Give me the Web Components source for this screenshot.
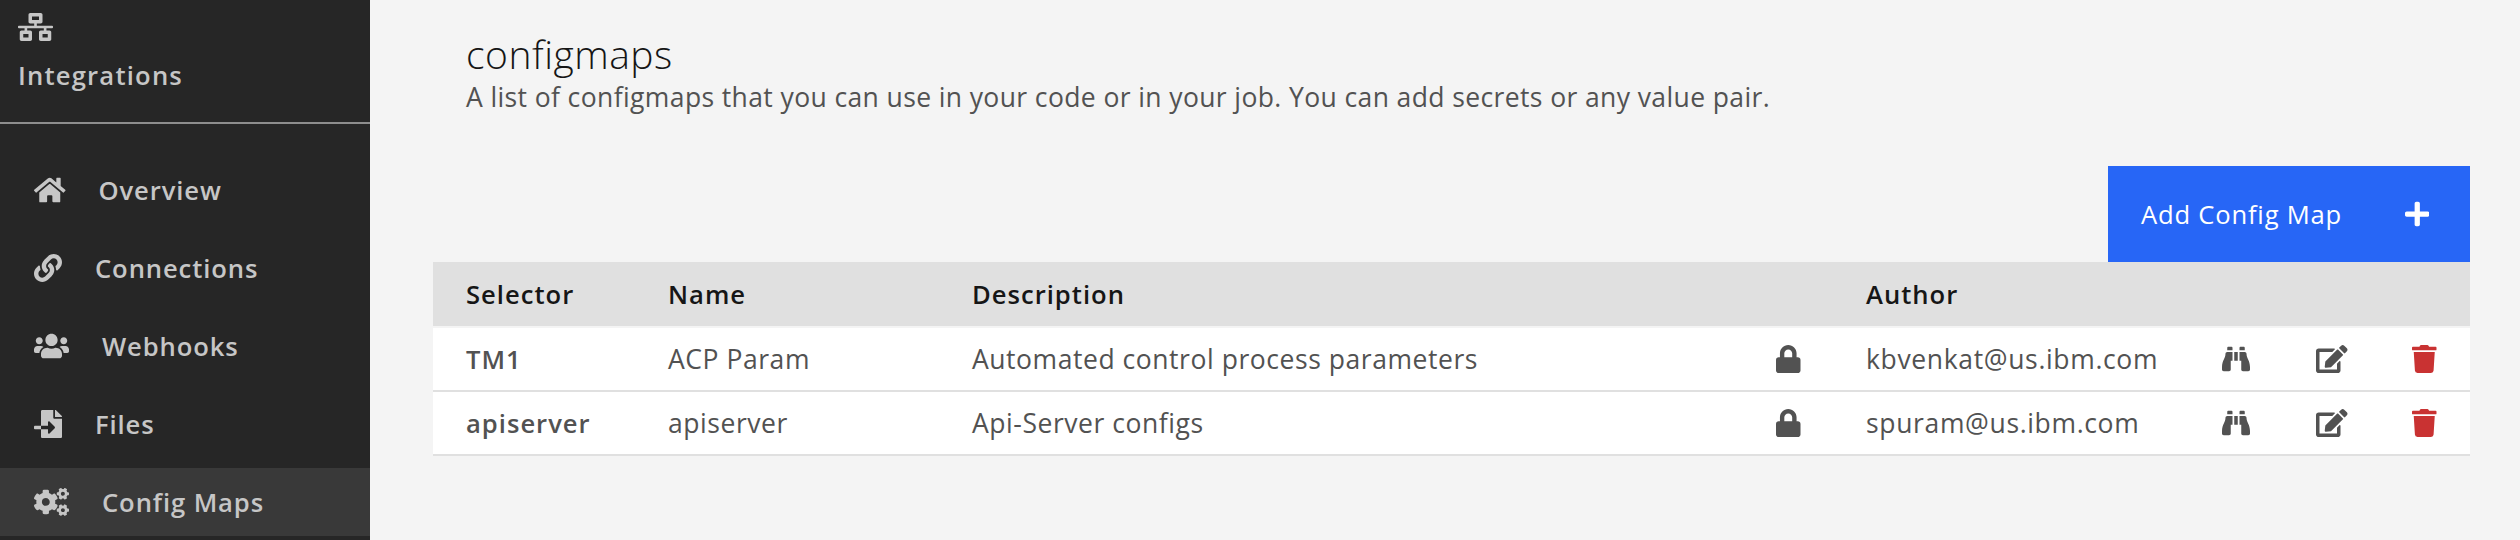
<!DOCTYPE html>
<html>
<head>
<meta charset="utf-8">
<title>Config Maps</title>
<style>
  html, body { margin: 0; height: 540px; overflow: hidden; background: #f4f4f4; }
  body { display: flex; font-family: "Open Sans", "Noto Sans", sans-serif; }
</style>
</head>
<body>
<app-sidebar>
  <nav-item icon="home">Overview</nav-item>
  <nav-item icon="link">Connections</nav-item>
  <nav-item icon="users">Webhooks</nav-item>
  <nav-item icon="file-import">Files</nav-item>
  <nav-item icon="cogs" active>Config Maps</nav-item>
</app-sidebar>
<config-page heading="configmaps" description="A list of configmaps that you can use in your code or in your job. You can add secrets or any value pair.">
  <add-button slot="action">Add Config Map</add-button>
  <config-row header>
    <span>Selector</span><span>Name</span><span>Description</span><span></span><span>Author</span>
  </config-row>
  <config-row selector="TM1" name="ACP Param" description="Automated control process parameters" author="kbvenkat@us.ibm.com"></config-row>
  <config-row selector="apiserver" name="apiserver" description="Api-Server configs" author="spuram@us.ibm.com"></config-row>
</config-page>

<script>
const ICONS = {
  'network-wired': [640, 'M640 264v-16c0-8.84-7.16-16-16-16H344v-40h72c17.67 0 32-14.33 32-32V32c0-17.67-14.33-32-32-32H224c-17.67 0-32 14.33-32 32v128c0 17.67 14.33 32 32 32h72v40H16c-8.84 0-16 7.16-16 16v16c0 8.84 7.16 16 16 16h104v40H64c-17.67 0-32 14.33-32 32v128c0 17.67 14.33 32 32 32h160c17.67 0 32-14.33 32-32V352c0-17.67-14.33-32-32-32h-56v-40h304v40h-56c-17.67 0-32 14.33-32 32v128c0 17.67 14.33 32 32 32h160c17.67 0 32-14.33 32-32V352c0-17.67-14.33-32-32-32h-56v-40h104c8.84 0 16-7.16 16-16zM256 128V64h128v64H256zm-64 320H96v-64h96v64zm352 0h-96v-64h96v64z'],
  home: [576, 'M280.37 148.26L96 300.11V464a16 16 0 0 0 16 16l112.06-.29a16 16 0 0 0 15.92-16V368a16 16 0 0 1 16-16h64a16 16 0 0 1 16 16v95.64a16 16 0 0 0 16 16.05L464 480a16 16 0 0 0 16-16V300L295.67 148.26a12.19 12.19 0 0 0-15.3 0zM571.6 251.47L488 182.56V44.05a12 12 0 0 0-12-12h-56a12 12 0 0 0-12 12v72.61L318.47 43a48 48 0 0 0-61 0L4.34 251.47a12 12 0 0 0-1.6 16.9l25.5 31A12 12 0 0 0 45.15 301l235.22-193.74a12.19 12.19 0 0 1 15.3 0L530.9 301a12 12 0 0 0 16.9-1.6l25.5-31a12 12 0 0 0-1.7-16.93z'],
  link: [512, 'M326.612 185.391c59.747 59.809 58.927 155.698.36 214.59-.11.12-.24.25-.36.37l-67.2 67.2c-59.27 59.27-155.699 59.262-214.96 0-59.27-59.26-59.27-155.7 0-214.96l37.106-37.106c9.84-9.84 26.786-3.3 27.294 10.606.648 17.722 3.826 35.527 9.69 52.721 1.986 5.822.567 12.262-3.783 16.612l-13.087 13.087c-28.026 28.026-28.905 73.66-1.155 101.96 28.024 28.579 74.086 28.749 102.325.51l67.2-67.19c28.191-28.191 28.073-73.757 0-101.83-3.701-3.694-7.429-6.564-10.341-8.569a16.037 16.037 0 0 1-6.947-12.606c-.396-10.567 3.348-21.456 11.698-29.806l21.054-21.055c5.521-5.521 14.182-6.199 20.584-1.731a152.482 152.482 0 0 1 20.522 17.197zM467.547 44.449c-59.261-59.262-155.69-59.27-214.96 0l-67.2 67.2c-.12.12-.25.25-.36.37-58.566 58.892-59.387 154.781.36 214.59a152.454 152.454 0 0 0 20.521 17.196c6.402 4.468 15.064 3.789 20.584-1.731l21.054-21.055c8.35-8.35 12.094-19.239 11.698-29.806a16.037 16.037 0 0 0-6.947-12.606c-2.912-2.005-6.64-4.875-10.341-8.569-28.073-28.073-28.191-73.639 0-101.83l67.2-67.19c28.239-28.239 74.3-28.069 102.325.51 27.75 28.3 26.872 73.934-1.155 101.96l-13.087 13.087c-4.35 4.35-5.769 10.79-3.783 16.612 5.864 17.194 9.042 34.999 9.69 52.721.509 13.906 17.454 20.446 27.294 10.606l37.106-37.106c59.271-59.259 59.271-155.699.001-214.959z'],
  users: [640, 'M96 224c35.3 0 64-28.7 64-64s-28.7-64-64-64-64 28.7-64 64 28.7 64 64 64zm448 0c35.3 0 64-28.7 64-64s-28.7-64-64-64-64 28.7-64 64 28.7 64 64 64zm32 32h-64c-17.6 0-33.5 7.1-45.1 18.6 40.3 22.1 68.9 62 75.1 109.4h66c17.7 0 32-14.3 32-32v-32c0-35.3-28.7-64-64-64zm-256 0c61.9 0 112-50.1 112-112S381.9 32 320 32 208 82.1 208 144s50.1 112 112 112zm76.8 32h-8.3c-20.8 10-43.9 16-68.5 16s-47.6-6-68.5-16h-8.3C179.6 288 128 339.6 128 403.2V432c0 26.5 21.5 48 48 48h288c26.5 0 48-21.5 48-48v-28.8c0-63.6-51.6-115.2-115.2-115.2zm-223.7-13.4C161.5 263.1 145.6 256 128 256H64c-35.3 0-64 28.7-64 64v32c0 17.7 14.3 32 32 32h65.9c6.3-47.4 34.9-87.3 75.2-109.4z'],
  'file-import': [512, 'M16 288c-8.8 0-16 7.2-16 16v32c0 8.8 7.2 16 16 16h112v-64zm489-183L407.1 7c-4.5-4.5-10.6-7-17-7H384v128h128v-6.1c0-6.3-2.5-12.4-7-16.9zm-153 31V0H152c-13.3 0-24 10.7-24 24v264h128v-65.2c0-14.3 17.3-21.4 27.4-11.3L379 308c6.6 6.7 6.6 17.4 0 24l-95.7 96.4c-10.1 10.1-27.4 3-27.4-11.3V352H128v136c0 13.3 10.7 24 24 24h336c13.3 0 24-10.7 24-24V160H376c-13.2 0-24-10.8-24-24z'],
  cogs: [640, 'M512.1 191l-8.2 14.3c-3 5.3-9.4 7.5-15.1 5.4-11.8-4.4-22.6-10.7-32.1-18.6-4.6-3.8-5.8-10.5-2.8-15.7l8.2-14.3c-6.9-8-12.3-17.3-15.9-27.4h-16.5c-6 0-11.2-4.3-12.2-10.3-2-12-2.1-24.6 0-37.1 1-6 6.2-10.4 12.2-10.4h16.5c3.6-10.1 9-19.4 15.9-27.4l-8.2-14.3c-3-5.2-1.9-11.9 2.8-15.7 9.5-7.9 20.4-14.2 32.1-18.6 5.7-2.1 12.1.1 15.1 5.4l8.2 14.3c10.5-1.9 21.2-1.9 31.7 0L552 6.3c3-5.3 9.4-7.5 15.1-5.4 11.8 4.4 22.6 10.7 32.1 18.6 4.6 3.8 5.8 10.5 2.8 15.7l-8.2 14.3c6.9 8 12.3 17.3 15.9 27.4h16.5c6 0 11.2 4.3 12.2 10.3 2 12 2.1 24.6 0 37.1-1 6-6.2 10.4-12.2 10.4h-16.5c-3.6 10.1-9 19.4-15.9 27.4l8.2 14.3c3 5.2 1.9 11.9-2.8 15.7-9.5 7.9-20.4 14.2-32.1 18.6-5.7 2.1-12.1-.1-15.1-5.4l-8.2-14.3c-10.4 1.9-21.2 1.9-31.7 0zm-10.5-58.8c38.5 29.6 82.4-14.3 52.8-52.8-38.5-29.7-82.4 14.3-52.8 52.8zM386.3 286.1l33.7 16.8c10.1 5.8 14.5 18.1 10.5 29.1-8.9 24.2-26.4 46.4-42.6 65.8-7.4 8.9-20.2 11.1-30.3 5.3l-29.1-16.8c-16 13.7-34.6 24.6-54.9 31.7v33.6c0 11.6-8.3 21.6-19.7 23.6-24.6 4.2-50.4 4.4-75.9 0-11.5-2-20-11.9-20-23.6V418c-20.3-7.2-38.9-18-54.9-31.7L74 403c-10 5.8-22.9 3.6-30.3-5.3-16.2-19.4-33.3-41.6-42.2-65.7-4-10.9.4-23.2 10.5-29.1l33.3-16.8c-3.9-20.9-3.9-42.4 0-63.4L12 205.8c-10.1-5.8-14.6-18.1-10.5-29 8.9-24.2 26-46.4 42.2-65.8 7.4-8.9 20.2-11.1 30.3-5.3l29.1 16.8c16-13.7 34.6-24.6 54.9-31.7V57.1c0-11.5 8.2-21.5 19.6-23.5 24.6-4.2 50.5-4.4 76-.1 11.5 2 20 11.9 20 23.6v33.6c20.3 7.2 38.9 18 54.9 31.7l29.1-16.8c10-5.8 22.9-3.6 30.3 5.3 16.2 19.4 33.2 41.6 42.1 65.8 4 10.9.1 23.2-10 29.1l-33.7 16.8c3.9 21 3.9 42.5 0 63.5zm-117.6 21.1c59.2-77-28.7-164.9-105.7-105.7-59.2 77 28.7 164.9 105.7 105.7zm243.4 182.7l-8.2 14.3c-3 5.3-9.4 7.5-15.1 5.4-11.8-4.4-22.6-10.7-32.1-18.6-4.6-3.8-5.8-10.5-2.8-15.7l8.2-14.3c-6.9-8-12.3-17.3-15.9-27.4h-16.5c-6 0-11.2-4.3-12.2-10.3-2-12-2.1-24.6 0-37.1 1-6 6.2-10.4 12.2-10.4h16.5c3.6-10.1 9-19.4 15.9-27.4l-8.2-14.3c-3-5.2-1.9-11.9 2.8-15.7 9.5-7.9 20.4-14.2 32.1-18.6 5.7-2.1 12.1.1 15.1 5.4l8.2 14.3c10.5-1.9 21.2-1.9 31.7 0l8.2-14.3c3-5.3 9.4-7.5 15.1-5.4 11.8 4.4 22.6 10.7 32.1 18.6 4.6 3.8 5.8 10.5 2.8 15.7l-8.2 14.3c6.9 8 12.3 17.3 15.9 27.4h16.5c6 0 11.2 4.3 12.2 10.3 2 12 2.1 24.6 0 37.1-1 6-6.2 10.4-12.2 10.4h-16.5c-3.6 10.1-9 19.4-15.9 27.4l8.2 14.3c3 5.2 1.9 11.9-2.8 15.7-9.5 7.9-20.4 14.2-32.1 18.6-5.7 2.1-12.1-.1-15.1-5.4l-8.2-14.3c-10.4 1.9-21.2 1.9-31.7 0zM501.6 431c38.5 29.6 82.4-14.3 52.8-52.8-38.5-29.6-82.4 14.3-52.8 52.8z'],
  lock: [448, 'M400 224h-24v-72C376 68.2 307.8 0 224 0S72 68.2 72 152v72H48c-26.5 0-48 21.5-48 48v192c0 26.5 21.5 48 48 48h352c26.5 0 48-21.5 48-48V272c0-26.5-21.5-48-48-48zm-104 0H152v-72c0-39.7 32.3-72 72-72s72 32.3 72 72v72z'],
  binoculars: [512, 'M416 48c0-8.84-7.16-16-16-16h-64c-8.84 0-16 7.16-16 16v48h96V48zM63.91 159.99C61.4 253.84 3.46 274.22 0 404v44c0 17.67 14.33 32 32 32h96c17.67 0 32-14.33 32-32V288h32V128H95.84c-17.63 0-31.45 14.37-31.93 31.99zm384.18 0c-.48-17.62-14.3-31.99-31.93-31.99H320v160h32v160c0 17.67 14.33 32 32 32h96c17.67 0 32-14.33 32-32v-44c-3.46-129.78-61.4-150.16-63.91-244.01zM176 32h-64c-8.84 0-16 7.16-16 16v48h96V48c0-8.84-7.16-16-16-16zm48 256h64V128h-64v160z'],
  edit: [576, 'M402.6 83.2l90.2 90.2c3.8 3.8 3.8 10 0 13.8L274.4 405.6l-92.8 10.3c-12.4 1.4-22.9-9.1-21.5-21.5l10.3-92.8L388.8 83.2c3.8-3.8 10-3.8 13.8 0zm162-22.9l-48.8-48.8c-15.2-15.2-39.9-15.2-55.2 0l-35.4 35.4c-3.8 3.8-3.8 10 0 13.8l90.2 90.2c3.8 3.8 10 3.8 13.8 0l35.4-35.4c15.2-15.3 15.2-40 0-55.2zM384 346.2V448H64V128h229.8c3.2 0 6.2-1.3 8.5-3.5l40-40c7.6-7.6 2.2-20.5-8.5-20.5H48C21.5 64 0 85.5 0 112v352c0 26.5 21.5 48 48 48h352c26.5 0 48-21.5 48-48V306.2c0-10.7-12.9-16-20.5-8.5l-40 40c-2.2 2.3-3.5 5.3-3.5 8.5z'],
  trash: [448, 'M432 32H312l-9.4-18.7A24 24 0 0 0 281.1 0H166.8a23.72 23.72 0 0 0-21.4 13.3L136 32H16A16 16 0 0 0 0 48v32a16 16 0 0 0 16 16h416a16 16 0 0 0 16-16V48a16 16 0 0 0-16-16zM53.2 467a48 48 0 0 0 47.9 45h245.8a48 48 0 0 0 47.9-45L416 128H32z'],
  plus: [448, 'M416 208H272V64c0-17.67-14.33-32-32-32h-32c-17.67 0-32 14.33-32 32v144H32c-17.67 0-32 14.33-32 32v32c0 17.67 14.33 32 32 32h144v144c0 17.67 14.33 32 32 32h32c17.67 0 32-14.33 32-32V304h144c17.67 0 32-14.33 32-32v-32c0-17.67-14.33-32-32-32z']
};

/** Font Awesome style glyph, 28px tall, width follows the viewBox. */
class FaIcon extends HTMLElement {
  constructor () {
    super();
    this.attachShadow({mode: 'open'}).innerHTML = `
      <style>
      :host { display: inline-flex; flex: none; }
      svg { display: block; fill: currentColor; }
      </style>
      <svg height="28"><path/></svg>`;
  }
  static get observedAttributes () {
    return ['name'];
  }
  attributeChangedCallback (name, oldValue, newValue) {
    if (oldValue === newValue || !ICONS[newValue]) return;
    const [w, d] = ICONS[newValue];
    const svg = this.shadowRoot.querySelector('svg');
    svg.setAttribute('width', 28 * w / 512);
    svg.setAttribute('viewBox', `0 0 ${w} 512`);
    svg.querySelector('path').setAttribute('d', d);
  }
}
customElements.define('fa-icon', FaIcon);

const sidebarTemplate = document.createElement('template');
sidebarTemplate.innerHTML = `
  <style>
  :host {
    display: block;
    flex: none;
    width: 370px;
    height: 540px;
    background: #262626;
    color: #c6c6c6;
  }
  header {
    box-sizing: border-box;
    height: 124px;
    padding: 13px 0 0 18px;
    border-bottom: 2px solid #8d8d8d;
  }
  .title {
    margin-top: 12px;
    font-size: 25.6px;
    line-height: 36px;
    font-weight: 600;
    letter-spacing: 1.2px;
  }
  nav { padding-top: 32px; }
  </style>
  <header>
    <fa-icon name="network-wired"></fa-icon>
    <div class="title">Integrations</div>
  </header>
  <nav><slot></slot></nav>
`;
class AppSidebar extends HTMLElement {
  constructor () {
    super();
    this.attachShadow({mode: 'open'}).appendChild(sidebarTemplate.content.cloneNode(true));
  }
}
customElements.define('app-sidebar', AppSidebar);

const navTemplate = document.createElement('template');
navTemplate.innerHTML = `
  <style>
  :host {
    display: flex;
    align-items: center;
    gap: 33px;
    height: 68px;
    margin-bottom: 10px;
    padding-left: 34px;
    font-size: 25.6px;
    font-weight: 600;
    letter-spacing: .9px;
    color: #c6c6c6;
  }
  :host([active]) { background: #393939; }
  </style>
  <fa-icon></fa-icon>
  <slot></slot>
`;
class NavItem extends HTMLElement {
  constructor () {
    super();
    this.attachShadow({mode: 'open'}).appendChild(navTemplate.content.cloneNode(true));
    this.shadowRoot.querySelector('fa-icon').setAttribute('name', this.getAttribute('icon'));
  }
}
customElements.define('nav-item', NavItem);

const pageTemplate = document.createElement('template');
pageTemplate.innerHTML = `
  <style>
  :host {
    display: block;
    flex: 1;
    min-width: 0;
    padding: 0 50px 0 63px;
  }
  .intro { padding: 30px 0 0 33px; height: 166px; box-sizing: border-box; }
  h1 {
    margin: 0 0 3px;
    font-size: 39px;
    line-height: 48px;
    font-weight: 300;
    letter-spacing: .5px;
    color: #161616;
  }
  p {
    margin: 0;
    font-size: 26.5px;
    line-height: 32px;
    font-weight: 400;
    letter-spacing: .39px;
    color: #525252;
  }
  .actions { display: flex; justify-content: flex-end; }
  </style>
  <div class="intro">
    <h1 id="heading"></h1>
    <p id="description"></p>
  </div>
  <div class="actions"><slot name="action"></slot></div>
  <slot></slot>
`;
class ConfigPage extends HTMLElement {
  constructor () {
    super();
    this.attachShadow({mode: 'open'}).appendChild(pageTemplate.content.cloneNode(true));
    this.shadowRoot.getElementById('heading').textContent = this.getAttribute('heading');
    this.shadowRoot.getElementById('description').textContent = this.getAttribute('description');
  }
}
customElements.define('config-page', ConfigPage);

const buttonTemplate = document.createElement('template');
buttonTemplate.innerHTML = `
  <style>
  :host {
    display: flex;
    align-items: center;
    justify-content: space-between;
    box-sizing: border-box;
    width: 362px;
    height: 96px;
    padding: 0 41px 0 33px;
    background: #2766f6;
    color: #fff;
    font-size: 25.6px;
    font-weight: 400;
    letter-spacing: .8px;
  }
  </style>
  <slot></slot>
  <fa-icon name="plus"></fa-icon>
`;
class AddButton extends HTMLElement {
  constructor () {
    super();
    this.attachShadow({mode: 'open'}).appendChild(buttonTemplate.content.cloneNode(true));
  }
}
customElements.define('add-button', AddButton);

const rowTemplate = document.createElement('template');
rowTemplate.innerHTML = `
  <style>
  :host {
    display: grid;
    grid-template-columns: 202px 304px 804px 90px 356px 94px 96px 1fr;
    align-items: center;
    box-sizing: border-box;
    height: 64px;
    padding-left: 33px;
    background: #fff;
    border-bottom: 2px solid #e0e0e0;
    font-size: 26.5px;
    font-weight: 400;
    letter-spacing: .55px;
    color: #525252;
  }
  :host([header]) {
    margin-bottom: 2px;
    background: #e0e0e0;
    border-bottom: 0;
    font-size: 25.6px;
    font-weight: 600;
    letter-spacing: 1px;
    color: #161616;
  }
  .selector { font-size: 25.6px; font-weight: 600; letter-spacing: 1px; }
  .author { letter-spacing: .65px; }
  .del { color: #c93232; }
  </style>
  <slot></slot>
`;
class ConfigRow extends HTMLElement {
  constructor () {
    super();
    this.attachShadow({mode: 'open'}).appendChild(rowTemplate.content.cloneNode(true));
    if (this.hasAttribute('header')) return;
    this.shadowRoot.querySelector('slot').remove();
    const cell = (text, cls) => {
      const span = document.createElement('span');
      span.textContent = text;
      if (cls) span.className = cls;
      return span;
    };
    const icon = (name, cls) => {
      const el = document.createElement('fa-icon');
      el.setAttribute('name', name);
      if (cls) el.className = cls;
      return el;
    };
    this.shadowRoot.append(
      cell(this.getAttribute('selector'), 'selector'),
      cell(this.getAttribute('name')),
      cell(this.getAttribute('description')),
      icon('lock'),
      cell(this.getAttribute('author'), 'author'),
      icon('binoculars'),
      icon('edit'),
      icon('trash', 'del')
    );
  }
}
customElements.define('config-row', ConfigRow);
</script>
</body>
</html>
